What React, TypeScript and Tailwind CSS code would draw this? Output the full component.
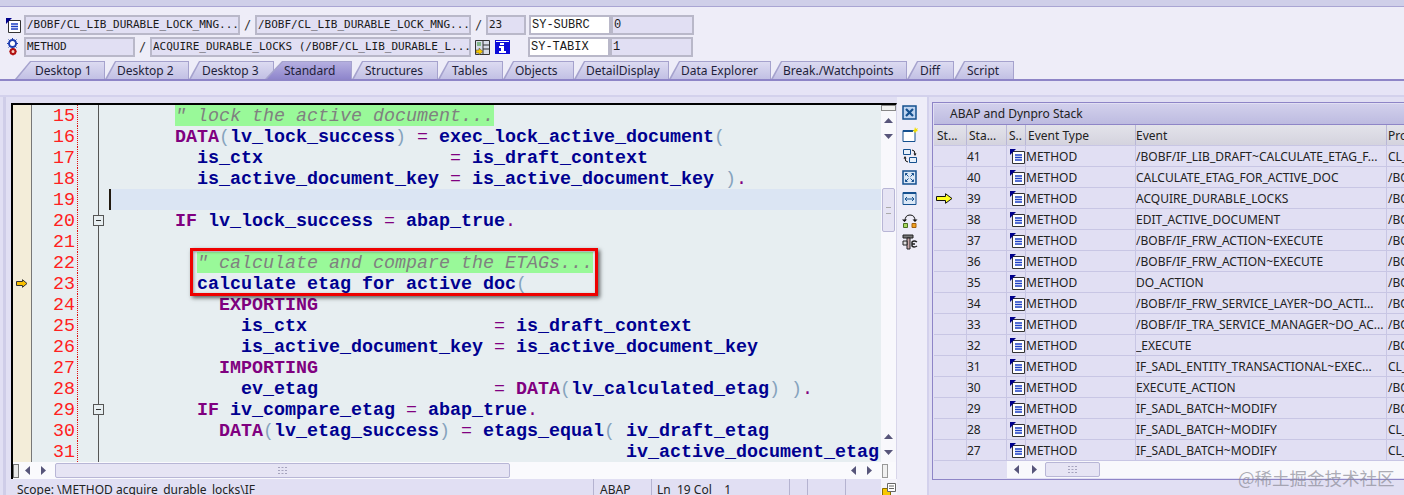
import React from 'react';

const tabs = [
  { name: 'Desktop 1', w: 'w-[90px]', pl: 'pl-[20px]', slant: 'wide' },
  { name: 'Desktop 2', w: 'w-[84px]', pl: 'pl-[12px]' },
  { name: 'Desktop 3', w: 'w-[85px]', pl: 'pl-[13px]' },
  { name: 'Standard', w: 'w-[87px] -ml-[9px] relative', pl: 'pl-[19px]', active: true },
  { name: 'Structures', w: 'w-[86px]', pl: 'pl-[13px]' },
  { name: 'Tables', w: 'w-[65px]', pl: 'pl-[14px]' },
  { name: 'Objects', w: 'w-[71px]', pl: 'pl-[12px]' },
  { name: 'DetailDisplay', w: 'w-[95px]', pl: 'pl-[12px]' },
  { name: 'Data Explorer', w: 'w-[102px]', pl: 'pl-[12px]' },
  { name: 'Break./Watchpoints', w: 'w-[136px]', pl: 'pl-[12px]' },
  { name: 'Diff', w: 'w-[47px]', pl: 'pl-[13px]' },
  { name: 'Script', w: 'w-[60px]', pl: 'pl-[13px]' },
];

const lines: { no: number; text?: string; comment?: string; indent?: number; fold?: boolean; arrow?: boolean; cur?: boolean }[] = [
  { no: 15, indent: 6, comment: '" lock the active document...' },
  { no: 16, text: '      DATA(lv_lock_success) = exec_lock_active_document(' },
  { no: 17, text: '        is_ctx                 = is_draft_context' },
  { no: 18, text: '        is_active_document_key = is_active_document_key ).' },
  { no: 19, cur: true },
  { no: 20, text: '      IF lv_lock_success = abap_true.', fold: true },
  { no: 21 },
  { no: 22, indent: 8, comment: '" calculate and compare the ETAGs...' },
  { no: 23, text: '        calculate etag for active doc(', arrow: true },
  { no: 24, text: '          EXPORTING' },
  { no: 25, text: '            is_ctx                 = is_draft_context' },
  { no: 26, text: '            is_active_document_key = is_active_document_key' },
  { no: 27, text: '          IMPORTING' },
  { no: 28, text: '            ev_etag                = DATA(lv_calculated_etag) ).' },
  { no: 29, text: '        IF iv_compare_etag = abap_true.', fold: true },
  { no: 30, text: '          DATA(lv_etag_success) = etags_equal( iv_draft_etag' },
  { no: 31, text: ' '.repeat(47) + 'iv_active_document_etag' },
];

function Code({ text }: { text: string }) {
  const parts = text.split(/(\bDATA\b|\bIF\b|\bEXPORTING\b|\bIMPORTING\b|[().=])/);
  return (
    <>
      {parts.map((p, i) => {
        if (p === '(' || p === ')') return <span key={i} className="text-[#86a3bd]">{p}</span>;
        if (p === '=' || p === '.') return <span key={i} className="text-[#800080]">{p}</span>;
        if (/^[A-Z]+$/.test(p)) return <span key={i} className="font-bold text-[#800080]">{p}</span>;
        return <span key={i} className="font-bold text-[#000090]">{p}</span>;
      })}
    </>
  );
}

const stack = [
  ['41', '/BOBF/IF_LIB_DRAFT~CALCULATE_ETAG_F...', 'CL_LIB'],
  ['40', 'CALCULATE_ETAG_FOR_ACTIVE_DOC', '/BOBF/'],
  ['39', 'ACQUIRE_DURABLE_LOCKS', '/BOBF/'],
  ['38', 'EDIT_ACTIVE_DOCUMENT', '/BOBF/'],
  ['37', '/BOBF/IF_FRW_ACTION~EXECUTE', '/BOBF/'],
  ['36', '/BOBF/IF_FRW_ACTION~EXECUTE', '/BOBF/'],
  ['35', 'DO_ACTION', '/BOBF/'],
  ['34', '/BOBF/IF_FRW_SERVICE_LAYER~DO_ACTI...', '/BOBF/'],
  ['33', '/BOBF/IF_TRA_SERVICE_MANAGER~DO_AC...', '/BOBF/'],
  ['32', '_EXECUTE', '/BOBF/'],
  ['31', 'IF_SADL_ENTITY_TRANSACTIONAL~EXEC...', 'CL_SAD'],
  ['30', 'EXECUTE_ACTION', '/BOBF/'],
  ['29', 'IF_SADL_BATCH~MODIFY', '/BOBF/'],
  ['28', 'IF_SADL_BATCH~MODIFY', 'CL_SAD'],
  ['27', 'IF_SADL_BATCH~MODIFY', 'CL_SAD'],
];

function DocIcon() {
  return (
    <svg width="15" height="15" viewBox="0 0 15 15" className="shrink-0">
      <path d="M2.500 2.500h12v12h-12z" fill="#fff" stroke="#333" />
      <path d="M0 0h6l-6 6z" fill="#00008b" />
      <path d="M5 6h7M5 8.500h7M5 11h7" stroke="#1c3fc4" strokeWidth="1.3" />
    </svg>
  );
}

function Gear() {
  return (
    <svg width="12" height="18" viewBox="0 0 12 18" className="shrink-0">
      <circle cx="5.500" cy="5.500" r="3.500" fill="#fff" stroke="#1f3fb0" strokeWidth="2" />
      <path d="M5.500 0v2M5.500 9v2M0 5.500h2M9 5.500h2M1.500 1.500l1.500 1.500M8 8l1.500 1.500M9.500 1.500L8 3M3 8L1.500 9.500" stroke="#1f3fb0" />
      <circle cx="6" cy="13.500" r="2.500" fill="#f8d0c0" stroke="#b01010" strokeWidth="2" />
      <path d="M6 10v1M6 16v1.500M2.500 13.500h1M8.500 13.500h1" stroke="#b01010" />
    </svg>
  );
}

function YellowArrow({ big }: { big?: boolean }) {
  return big ? (
    <svg width="17" height="11" viewBox="0 0 17 11" className="shrink-0">
      <path d="M.5 3.500h9V.7l6.500 4.800-6.500 4.800V7.500h-9z" fill="#ffff20" stroke="#111" />
    </svg>
  ) : (
    <svg width="12" height="9" viewBox="0 0 12 9" className="shrink-0">
      <path d="M.5 2.500h6V.7L11 4.500 6.500 8.300V6.500h-6z" fill="#f8c000" stroke="#333" />
    </svg>
  );
}

function TriUp() {
  return <svg width="9" height="5" viewBox="0 0 9 5"><path d="M4.500 0L9 5H0z" fill="#57557a" /></svg>;
}
function TriDown() {
  return <svg width="9" height="5" viewBox="0 0 9 5"><path d="M0 0h9L4.500 5z" fill="#57557a" /></svg>;
}
function TriLeft() {
  return <svg width="5" height="9" viewBox="0 0 5 9"><path d="M5 0v9L0 4.500z" fill="#57557a" /></svg>;
}
function TriRight() {
  return <svg width="5" height="9" viewBox="0 0 5 9"><path d="M0 0v9l5-4.500z" fill="#57557a" /></svg>;
}

function Grip() {
  return (
    <svg width="9" height="7" viewBox="0 0 9 7">
      <path d="M0 0h2v1H0zM3.500 0h2v1h-2zM7 0h2v1H7zM0 3h2v1H0zM3.500 3h2v1h-2zM7 3h2v1H7zM0 6h2v1H0zM3.500 6h2v1h-2zM7 6h2v1H7z" fill="#a5a3bd" />
    </svg>
  );
}

function ToolIcon({ children }: { children: React.ReactNode }) {
  return (
    <svg width="16" height="16" viewBox="0 0 16 16" className="shrink-0">
      {children}
    </svg>
  );
}

function Field({ cls, text, mono, white }: { cls: string; text: string; mono?: boolean; white?: boolean }) {
  return (
    <div
      className={`${cls} h-[20px] border-2 border-[#b9b8c9] flex items-center pl-[1px] overflow-hidden whitespace-pre text-[#1a1a1a] ${
        white ? 'bg-white' : 'bg-[#e1dff3]'
      } ${
        mono
          ? "font-['Liberation_Mono',monospace] text-[12px]"
          : "font-['DejaVu_Sans_Mono',monospace] text-[11px]"
      }`}
    >
      {text}
    </div>
  );
}

function Slash({ cls }: { cls: string }) {
  return <div className={`${cls} text-center text-[12px] font-['DejaVu_Sans_Mono',monospace] text-[#333]`}>/</div>;
}

export default function App() {
  return (
    <div className="relative w-[1404px] h-[495px] overflow-hidden bg-[#e1dff3] font-['Noto_Sans',sans-serif] text-[12px] text-[#222]">
      {/* top bar */}
      <div className="h-[7px] bg-[#cfcfe9] border-b border-[#a9a5d3]" />

      {/* debugger header */}
      <div className="pt-[8px] flex flex-col gap-[2px] bg-[#eeedf8] pb-[4px]">
        <div className="flex items-center pl-[6px]">
          <div className="w-[18px]"><DocIcon /></div>
          <Field cls="w-[216px]" text="/BOBF/CL_LIB_DURABLE_LOCK_MNG..." />
          <Slash cls="w-[15px]" />
          <Field cls="w-[216px]" text="/BOBF/CL_LIB_DURABLE_LOCK_MNG..." />
          <Slash cls="w-[15px]" />
          <Field cls="w-[40px]" text="23" />
          <Field cls="w-[82px] ml-[3px]" text="SY-SUBRC" mono white />
          <Field cls="w-[83px]" text="0" mono />
        </div>
        <div className="flex items-center pl-[6px]">
          <div className="w-[18px] pl-[1px]"><Gear /></div>
          <Field cls="w-[111px]" text="METHOD" />
          <Slash cls="w-[15px]" />
          <Field cls="w-[321px]" text="ACQUIRE_DURABLE_LOCKS (/BOBF/CL_LIB_DURABLE_L..." />
          <div className="w-[22px] pl-[4px]">
            <svg width="15" height="15" viewBox="0 0 15 15">
              <path d="M.5.5h14v14H.5z" fill="#d8dce8" stroke="#333" />
              <path d="M8 .5v14M8 5h6M8 9h6" stroke="#333" />
              <path d="M1 10h3V8l4 3.500L4 15v-2H1z" fill="#f8c800" stroke="#444" strokeWidth=".5" />
              <path d="M2 3h4M2 5h4" stroke="#2f8f2f" />
            </svg>
          </div>
          <div className="w-[35px] pl-[2px]">
            <svg width="15" height="14" viewBox="0 0 15 14">
              <path d="M0 0h15v14H0z" fill="#0a0ad8" />
              <path d="M1 1h13v1H1zM5 3h4v2H5zM4 6h5v5h2v2H4v-2h2V8H4z" fill="#fff" />
            </svg>
          </div>
          <Field cls="w-[82px]" text="SY-TABIX" mono white />
          <Field cls="w-[83px]" text="1" mono />
        </div>
      </div>

      {/* tabs */}
      <div className="flex h-[18px] pl-[15px] bg-[#eeedf8]">
        {tabs.map((t) => (
          <div
            key={t.name}
            className={`${t.w} h-[18px] bg-[#a5a2cd] pt-[1px] pr-[1px] ${
              t.active
                ? '[clip-path:polygon(0_100%,17px_0,100%_0,100%_100%)]'
                : t.slant
                  ? '[clip-path:polygon(0_100%,15px_0,100%_0,100%_100%)]'
                  : '[clip-path:polygon(0_100%,10px_0,100%_0,100%_100%)]'
            }`}
          >
            <div
              className={`h-[17px] flex items-center whitespace-nowrap text-[12px] text-[#1f1f3a] ${t.pl} ${
                t.active
                  ? 'bg-gradient-to-b from-[#b5afe0] to-[#8f86cc] [clip-path:polygon(2px_100%,18px_0,100%_0,100%_100%)]'
                  : t.slant
                    ? 'bg-gradient-to-b from-[#dcdbf1] to-[#c2c0e4] [clip-path:polygon(2px_100%,16px_0,100%_0,100%_100%)]'
                    : 'bg-gradient-to-b from-[#dcdbf1] to-[#c2c0e4] [clip-path:polygon(2px_100%,11px_0,100%_0,100%_100%)]'
              }`}
            >
              {t.name}
            </div>
          </div>
        ))}
      </div>
      <div className="h-[18px] border-t-2 border-[#8e85c7] border-b-2 border-b-[#d3d1ec] bg-[#e6e4f6]" />

      {/* main area */}
      <div className="flex ml-[3px] border-l-[3px] border-[#cfcde8] pl-[5px] h-[398px]">
        {/* editor */}
        <div className="w-[886px] pt-[6px] flex flex-col shrink-0">
          <div className="h-[376px] flex flex-col border-l-2 border-t-2 border-black border-r border-r-[#d8d6ea] bg-white">
            <div className="flex h-[357px]">
              <div className="flex-1 min-w-0">
                {lines.map((l) => (
                  <div key={l.no} className="flex h-[21px] font-['Liberation_Mono',monospace] text-[18.33px] leading-[23px] whitespace-pre overflow-hidden">
                    <div className="w-[19px] shrink-0 bg-[#f3edd9] border-r border-[#777] flex items-center justify-center">
                      {l.arrow && <YellowArrow />}
                    </div>
                    <div className="w-[46px] shrink-0 pr-[2px] bg-[#e7eef1] text-right text-[#ff2020] border-r border-dotted border-[#e01010]">
                      {l.no}
                    </div>
                    <div className="relative w-[31px] shrink-0 bg-[#e7eef1]">
                      <div className="w-[21px] h-full border-r border-[#555]" />
                      {l.fold && (
                        <div className="absolute left-[15px] top-[5px] w-[11px] h-[11px] border border-[#555] bg-[#e7eef1] flex items-center justify-center">
                          <div className="w-[5px] h-px bg-[#333]" />
                        </div>
                      )}
                    </div>
                    <div className={`flex-1 overflow-hidden ${l.cur ? 'bg-[#dbe5f3] border-l-2 border-[#221a10]' : 'bg-[#e7eef1]'}`}>
                      {l.comment && (
                        <>
                          {' '.repeat(l.indent ?? 0)}
                          <span className="inline-block h-[21px] align-top italic text-[#808080] bg-[#99f999]">{l.comment}</span>
                        </>
                      )}
                      {l.text && <Code text={l.text} />}
                    </div>
                  </div>
                ))}
              </div>
              {/* vertical scrollbar */}
              <div className="w-[15px] shrink-0 bg-[#f8f8fc] flex flex-col items-center pb-[2px]">
                <div className="w-[15px] h-[6px] border border-[#888] bg-[#f0f0f0]" />
                <div className="h-[16px] mt-[1px] flex items-center"><TriUp /></div>
                <div className="h-[16px] flex items-center"><TriDown /></div>
                <div className="w-[13px] h-[44px] mt-[44px] rounded-[2px] border border-[#b8b6d6] bg-[#e6e4f4] flex items-center justify-center">
                  <div className="w-[5px] h-[7px] border-y border-dashed border-[#aaa]" />
                </div>
                <div className="flex-1" />
                <div className="h-[16px] flex items-center"><TriUp /></div>
                <div className="h-[16px] flex items-center"><TriDown /></div>
              </div>
            </div>
            {/* horizontal scrollbar */}
            <div className="h-[17px] flex items-center bg-[#fafafd]">
              <div className="w-[6px] h-[14px] border border-[#777] bg-[#e8e8e8]" />
              <div className="w-[16px] flex justify-center"><TriLeft /></div>
              <div className="w-[16px] flex justify-center"><TriRight /></div>
              <div className="w-[455px] h-[15px] ml-[4px] rounded-[2px] border border-[#b8b6d6] bg-[#e6e4f4] flex items-center justify-center">
                <Grip />
              </div>
              <div className="flex-1" />
              <div className="w-[16px] flex justify-center"><TriLeft /></div>
              <div className="w-[16px] flex justify-center"><TriRight /></div>
              <div className="w-[6px] h-[14px] ml-[5px] mr-[8px] border border-[#999] bg-[#f0f0f0]" />
            </div>
          </div>
          {/* status */}
          <div className="h-[16px] flex items-start overflow-hidden text-[12px] leading-[22px] bg-[#e1dff3]">
            <div className="w-[582px] pl-[6px] h-full">Scope: \METHOD acquire_durable_locks\IF</div>
            <div className="w-[58px] pl-[6px] h-full border-l border-[#b5b3d0]">ABAP</div>
            <div className="w-[138px] pl-[5px] h-full border-l border-[#b5b3d0] whitespace-pre">Ln  19 Col    1</div>
            <div className="w-[18px] border-l border-[#b5b3d0] h-full" />
            <div className="w-[38px] border-l border-[#b5b3d0] h-full" />
            <div className="w-[36px] border-l border-[#b5b3d0] h-full" />
            <div className="flex-1 h-full bg-[#f4f3fb] flex pl-[1px] pt-[4px]">
              <svg width="14" height="13" viewBox="0 0 14 13" className="shrink-0">
                <path d="M.5 5.500h8v8h-8z" fill="#f8c800" stroke="#8a6d00" />
                <path d="M5.500.5h8v8h-8z" fill="#fff" stroke="#666" />
                <path d="M7 3h5M7 5.500h5" stroke="#666" />
              </svg>
            </div>
          </div>
        </div>

        {/* toolbar */}
        <div className="w-[32px] shrink-0 flex flex-col items-start pl-[5px] gap-[5.5px] pt-[8px] bg-[#eeedf8] border-r-2 border-[#d3d1ec]">
          <ToolIcon>
            <path d="M1 1h13v13H1z" fill="#bfd4f0" stroke="#15508f" strokeWidth="1.500" />
            <path d="M4 4l7 7M11 4l-7 7" stroke="#15508f" strokeWidth="2.200" />
          </ToolIcon>
          <ToolIcon>
            <path d="M1 3.500h12v11H1z" fill="#fff" stroke="#15508f" />
            <path d="M1 3h10v2H1z" fill="#15508f" />
            <path d="M13 0l1 2 2-1-1 2 1 1-2 .5-1 2-.7-2-2-.5 2-1z" fill="#f2e000" />
          </ToolIcon>
          <ToolIcon>
            <path d="M1.500 1.500h7v5h-7zM7.500 9.500h7v5h-7z" fill="#e8f0fa" stroke="#15508f" />
            <path d="M10 2q3 0 3 4M6 14q-3 0-3-4" fill="none" stroke="#111" />
            <path d="M11.500 5.500h3L13 8zM1.500 10.500h3L3 8z" fill="#111" />
          </ToolIcon>
          <ToolIcon>
            <path d="M1 1h13v13H1z" fill="#dbe8f6" stroke="#15508f" strokeWidth="1.500" />
            <path d="M3.500 3.500l3 3M11.500 3.500l-3 3M3.500 11.500l3-3M11.500 11.500l-3-3M3.500 3.500h2M3.500 3.500v2M11.500 3.500h-2M11.500 3.500v2M3.500 11.500h2M3.500 11.500v-2M11.500 11.500h-2M11.500 11.500v-2" stroke="#15508f" />
          </ToolIcon>
          <ToolIcon>
            <path d="M1 1.500h13v12H1z" fill="#dbe8f6" stroke="#15508f" />
            <path d="M1 1h13v2H1z" fill="#15508f" />
            <path d="M3 8h9M3 8l2-2M3 8l2 2M12 8l-2-2M12 8l-2 2" stroke="#15508f" />
          </ToolIcon>
          <ToolIcon>
            <path d="M3 8q0-6 5-6t5 6" fill="none" stroke="#111" />
            <path d="M0 6.500h5L2.500 9zM10.500 6.500h5L13 9z" fill="#111" />
            <path d="M1.500 10.500h4v4h-4z" fill="#a8d860" stroke="#4a7020" />
            <path d="M10 10.500h4v4h-4z" fill="#f0a020" stroke="#a06010" />
          </ToolIcon>
          <ToolIcon>
            <path d="M1 1h10v3H1z" fill="#777" stroke="#222" />
            <path d="M5 4h3v11H5z" fill="#caa" stroke="#222" />
            <path d="M1 7h4v4H1z" fill="#ddd" stroke="#222" />
            <path d="M15 8q-3-2-5 0v4q2 2 5 0M10 10h3" fill="none" stroke="#222" strokeWidth="1.500" />
          </ToolIcon>
        </div>

        {/* separator */}
        <div className="w-[3px] shrink-0" />

        {/* ABAP and Dynpro Stack */}
        <div className="w-[472px] shrink-0 pt-[5px] flex flex-col h-[383px] border-b border-[#8e85c7]">
          <div className="border-l border-t border-[#8e85c7] flex flex-col flex-1 pl-[1px] pt-px">
            <div className="h-[21px] flex items-center pl-[16px] pb-[1px] border-b border-[#8e85c7] bg-gradient-to-b from-[#d2d0ec] to-[#bdbbe0] text-[12px] text-[#222]">
              ABAP and Dynpro Stack
            </div>
            <div className="flex h-[21px] bg-gradient-to-b from-[#e3e3ea] to-[#d4d3de] border-b border-[#c8c6e4] text-[#222] leading-[22px]">
              <div className="w-[33px] pl-[3px] border-r border-[#b9b7d6]">St...</div>
              <div className="w-[40px] pl-[2px] border-r border-[#b9b7d6]">Sta...</div>
              <div className="w-[19px] pl-[2px] border-r border-[#b9b7d6]">S..</div>
              <div className="w-[110px] pl-[2px] border-r border-[#b9b7d6]">Event Type</div>
              <div className="w-[251px] border-r border-[#b9b7d6]">Event</div>
              <div className="flex-1 pl-[1px] overflow-hidden">Program</div>
            </div>
            {stack.map((r) => (
              <div key={r[0]} className="flex h-[21px] border-b border-[#c8c6e4] leading-[22px] whitespace-nowrap">
                <div className="w-[33px] border-r border-[#c8c6e4] flex items-center pl-[2px]">
                  {r[0] === '39' && <YellowArrow big />}
                </div>
                <div className="w-[40px] border-r border-[#c8c6e4]">{r[0]}</div>
                <div className="w-[19px] pl-[3px] border-r border-[#c8c6e4] flex items-center"><DocIcon /></div>
                <div className="w-[110px] border-r border-[#c8c6e4]">METHOD</div>
                <div className="w-[251px] border-r border-[#c8c6e4] overflow-hidden">{r[1]}</div>
                <div className="flex-1 pl-[1px] overflow-hidden">{r[2]}</div>
              </div>
            ))}
            <div className="h-[17px] flex items-center ml-[73px] bg-[#f8f8fc]">
              <div className="w-[18px] flex justify-center"><TriLeft /></div>
              <div className="w-[18px] flex justify-center"><TriRight /></div>
              <div className="w-[55px] h-[15px] ml-[2px] rounded-[2px] border border-[#b8b6d6] bg-[#e6e4f4] flex items-center justify-center">
                <Grip />
              </div>
            </div>
          </div>
        </div>
      </div>

      {/* red annotation */}
      <div className="absolute left-[190px] top-[248px] w-[408px] h-[48px] border-[3px] border-[#ee0000] shadow-[2px_2px_4px_rgba(0,0,0,0.6),inset_1px_1px_3px_rgba(0,0,0,0.35)]" />

      {/* watermark */}
      <div className="absolute left-[1238px] top-[466px] text-[17.5px] leading-[24px] text-[#8a8a96]/70 font-['Noto_Sans_CJK_SC','Noto_Sans',sans-serif] whitespace-nowrap">
        @稀土掘金技术社区
      </div>
    </div>
  );
}
